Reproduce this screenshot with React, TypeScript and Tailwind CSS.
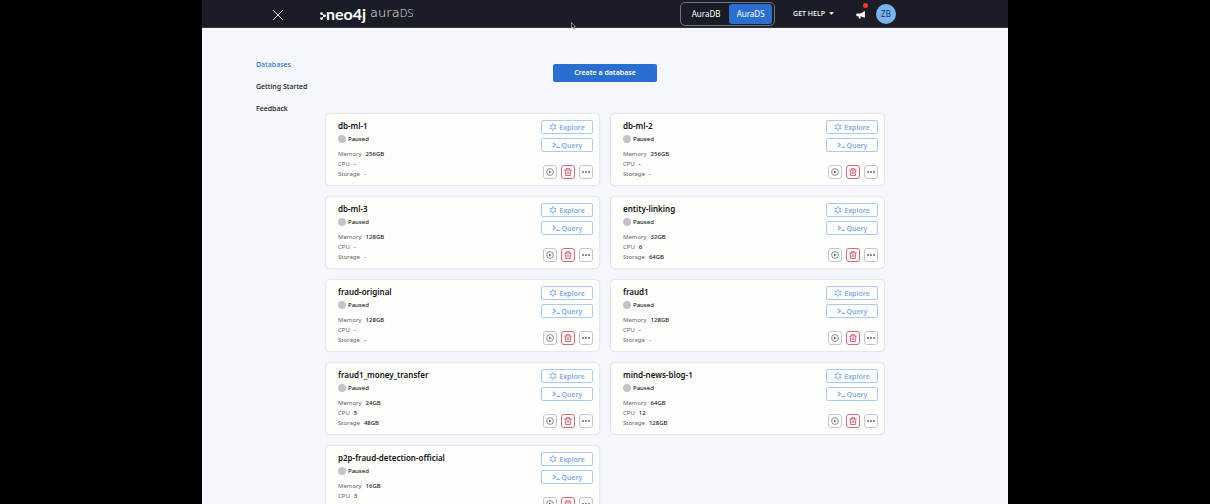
import type { ReactNode } from "react";

type Database = { name: string; memory: string; cpu: string; storage?: string };

const databases: Database[] = [
  { name: "db-ml-1", memory: "256GB", cpu: "-", storage: "-" },
  { name: "db-ml-2", memory: "256GB", cpu: "-", storage: "-" },
  { name: "db-ml-3", memory: "128GB", cpu: "-", storage: "-" },
  { name: "entity-linking", memory: "32GB", cpu: "6", storage: "64GB" },
  { name: "fraud-original", memory: "128GB", cpu: "-", storage: "-" },
  { name: "fraud1", memory: "128GB", cpu: "-", storage: "-" },
  { name: "fraud1_money_transfer", memory: "24GB", cpu: "5", storage: "48GB" },
  { name: "mind-news-blog-1", memory: "64GB", cpu: "12", storage: "128GB" },
  { name: "p2p-fraud-detection-official", memory: "16GB", cpu: "3" },
];

function CloseIcon() {
  return (
    <svg className="size-3" viewBox="0 0 12 12" fill="none" stroke="#e4e5e8" strokeWidth="1">
      <path d="M1 1l10 10M11 1L1 11" />
    </svg>
  );
}

function NeoMark() {
  return (
    <svg className="mt-1 h-3 w-1.5" viewBox="0 0 6 12" fill="#fff" stroke="#fff">
      <path d="M1.6 3.6L4.5 5.8L1.6 8.4" fill="none" strokeWidth="0.8" />
      <circle cx="1.5" cy="3.6" r="1.3" stroke="none" />
      <circle cx="4.5" cy="5.8" r="1.4" stroke="none" />
      <circle cx="1.5" cy="8.6" r="1.4" stroke="none" />
    </svg>
  );
}

function MegaphoneIcon() {
  return (
    <svg className="h-2 w-2.5" viewBox="0 0 10 8" fill="#fff">
      <path d="M8 0.2L8.9 0.2V6.6L8 6.6C6.8 5.8 5.6 5.4 4.4 5.3L4.8 7.6H3L2.4 5.3H1.2C0.6 5.3 0.3 4.9 0.3 4.3V3.4C0.3 2.8 0.7 2.4 1.3 2.4H4C5.6 2.2 6.9 1.3 8 0.2Z" />
    </svg>
  );
}

function ExploreIcon() {
  return (
    <svg className="size-2" viewBox="0 0 8 8" fill="none" stroke="currentColor">
      <path d="M4 1.7L6 2.8V5.2L4 6.3L2 5.2V2.8Z" strokeWidth="0.8" />
      <path d="M4 0.3V1.7M7.2 2.1L6 2.8M7.2 5.9L6 5.2M4 7.7V6.3M0.8 5.9L2 5.2M0.8 2.1L2 2.8" strokeWidth="1.2" />
    </svg>
  );
}

function QueryIcon() {
  return (
    <svg className="size-2" viewBox="0 0 8 8" fill="none" stroke="currentColor" strokeWidth="1.2">
      <path d="M0.8 1.8L3.4 3.9L0.8 6M4.4 6.4H7.8" />
    </svg>
  );
}

function ResumeIcon() {
  return (
    <svg className="size-2" viewBox="0 0 8 8" fill="none" stroke="currentColor">
      <circle cx="4" cy="4" r="3.4" strokeWidth="0.8" />
      <path d="M3 2.4L5.7 4L3 5.6Z" fill="currentColor" stroke="none" />
    </svg>
  );
}

function TrashIcon() {
  return (
    <svg className="size-2" viewBox="0 0 8 8" fill="none" stroke="currentColor" strokeWidth="0.8">
      <path d="M0.4 2H7.6M2.6 2V0.6H5.4V2M1.2 2L1.6 7.5H6.4L6.8 2M3.2 3.4V6.1M4.8 3.4V6.1" />
    </svg>
  );
}

function MoreIcon() {
  return (
    <svg className="size-2" viewBox="0 0 8 8" fill="currentColor">
      <circle cx="1" cy="4" r="0.9" />
      <circle cx="4" cy="4" r="0.9" />
      <circle cx="7" cy="4" r="0.9" />
    </svg>
  );
}

function OutlineButton({ icon, children }: { icon: ReactNode; children: ReactNode }) {
  return (
    <button className="flex h-3.5 w-full items-center justify-center gap-0.5 rounded-xs border border-[#a9cbf7] text-[7px] leading-none font-semibold text-[#7facea]">
      {icon}
      {children}
    </button>
  );
}

function Spec({ label, value }: { label: string; value: string }) {
  return (
    <div className="flex gap-1">
      <dt className="text-[#5c616b]">{label}</dt>
      <dd className="font-medium text-[#16181d]">{value}</dd>
    </div>
  );
}

function DatabaseCard({ db }: { db: Database }) {
  return (
    <article className="flex h-[71px] justify-between rounded-sm bg-[#fefffd] pt-1.5 pr-1.5 pb-1.5 pl-3 shadow-[0_0_2px_rgba(50,50,90,0.28)]">
      <div>
        <h2 className="text-[8px] leading-[11px] font-semibold text-[#0e1014]">{db.name}</h2>
        <p className="mt-1 flex h-2 items-center gap-0.5 text-[6px] leading-2 font-medium text-[#16181d]">
          <span className="size-2 rounded-full bg-[#c3c4c8]" />
          Paused
        </p>
        <dl className="mt-1.5 text-[6px] leading-[10px]">
          <Spec label="Memory" value={db.memory} />
          <Spec label="CPU" value={db.cpu} />
          {db.storage && <Spec label="Storage" value={db.storage} />}
        </dl>
      </div>
      <div className="flex w-[52px] flex-col gap-1">
        <OutlineButton icon={<ExploreIcon />}>Explore</OutlineButton>
        <OutlineButton icon={<QueryIcon />}>Query</OutlineButton>
        <div className="mt-auto flex justify-end gap-1">
          <button aria-label="Resume" className="flex size-3.5 items-center justify-center rounded-[3px] border border-[#c4c6cc] text-[#6b6f78]">
            <ResumeIcon />
          </button>
          <button aria-label="Delete" className="flex size-3.5 items-center justify-center rounded-[3px] border border-[#d4687f] text-[#cb4561]">
            <TrashIcon />
          </button>
          <button aria-label="More actions" className="flex size-3.5 items-center justify-center rounded-[3px] border border-[#c4c6cc] text-[#555962]">
            <MoreIcon />
          </button>
        </div>
      </div>
    </article>
  );
}

function Header() {
  return (
    <header className="flex h-7 items-center border-b border-[#33363e] bg-[#1a1d26] pr-28 pl-[70px] text-white">
      <button aria-label="Close menu" className="mt-0.5 flex">
        <CloseIcon />
      </button>
      <a href="#home" className="ml-9 flex items-center leading-none">
        <NeoMark />
        <span className="font-['Lato',sans-serif] text-[16px] leading-5 font-bold">neo4j</span>
        <span className="ml-1 font-['DejaVu_Sans',sans-serif] text-[13px] leading-5 font-extralight text-[#e4e6ea]">
          aura<span className="text-[10px]">DS</span>
        </span>
      </a>
      <div className="ml-auto flex h-6 items-center rounded-[5px] border border-[#72757c] p-0.5 text-[8px]">
        <button className="h-5 w-[46px]">AuraDB</button>
        <button className="h-5 w-[43px] rounded-[3px] bg-[#2a6fd0]">AuraDS</button>
      </div>
      <button className="ml-[18px] flex items-center gap-1 text-[7px] leading-4 font-medium">
        GET HELP
        <svg className="h-[3px] w-[5px]" viewBox="0 0 5 3" fill="#fff">
          <path d="M0 0.2H5L2.5 2.8Z" />
        </svg>
      </button>
      <button aria-label="Announcements" className="relative ml-[22px] flex pt-0.5">
        <MegaphoneIcon />
        <span className="absolute -top-1.5 -right-0.5 size-[5px] rounded-full bg-[#f5392c]" />
      </button>
      <button className="ml-2.5 size-5 rounded-full bg-[#7ab3f2] text-[8px] text-[#1e3552]">ZB</button>
    </header>
  );
}

export default function App() {
  return (
    <div className="h-screen overflow-hidden bg-black font-['Noto_Sans',sans-serif]">
      <div className="mx-auto min-h-full w-full max-w-[806px] bg-[#f6f6fd]">
        <Header />
        <div className="flex pt-8 pr-[124px] pl-[54px]">
          <nav className="flex w-[70px] shrink-0 flex-col gap-3 text-[7px] leading-[10px] font-medium text-[#0e1014]">
            <a href="#databases" className="text-[#2f75d6]">Databases</a>
            <a href="#getting-started">Getting Started</a>
            <a href="#feedback">Feedback</a>
          </nav>
          <main className="flex flex-1 flex-col pt-1">
            <button className="h-[18px] w-[104px] self-center rounded-xs bg-[#2a6fd0] text-[7px] font-semibold text-white">
              Create a database
            </button>
            <div className="mt-8 grid grid-cols-2 gap-3">
              {databases.map((db) => (
                <DatabaseCard key={db.name} db={db} />
              ))}
            </div>
          </main>
        </div>
      </div>
      <svg className="absolute top-[22px] left-[571px] h-2 w-[5px]" viewBox="0 0 5 8">
        <path d="M0.5 0.5V6.2L1.8 5.1L2.7 7.3L3.7 6.9L2.8 4.8H4.5Z" fill="#111" stroke="#d5d6da" strokeWidth="0.6" />
      </svg>
    </div>
  );
}
